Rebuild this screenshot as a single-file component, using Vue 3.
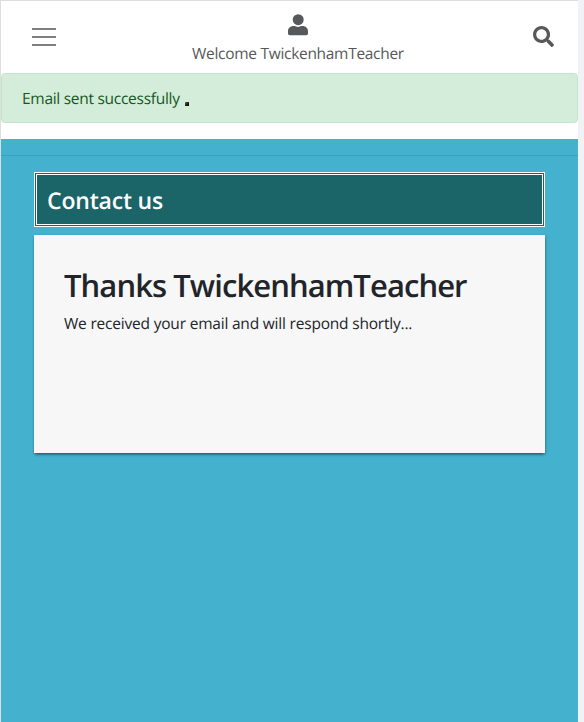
<script setup>
const user = 'TwickenhamTeacher'
</script>

<template>
  <div class="window">
    <div class="page">
      <header class="topbar">
        <button class="menu" aria-label="Menu"><i></i><i></i><i></i></button>
        <div class="account">
          <svg class="user-icon" viewBox="0 0 20 22"><circle cx="10.2" cy="5.7" r="5.500" /><path d="M0 19.300v-1.900c0-3.200 2.300-5.300 5.600-5.300h.8c2.500 1.100 4.700 1.100 7.200 0h.8c3.300 0 5.600 2.100 5.600 5.300v1.900c0 1.200-.7 1.900-1.900 1.900H1.900C.7 21.200 0 20.500 0 19.300z" /></svg>
          <span class="welcome">Welcome {{ user }}</span>
        </div>
        <svg class="search-icon" viewBox="0 0 512 512"><path d="M505 442.700L405.300 343c-4.500-4.500-10.600-7-17-7H372c27.600-35.300 44-79.700 44-128C416 93.100 322.900 0 208 0S0 93.100 0 208s93.100 208 208 208c48.300 0 92.700-16.400 128-44v16.300c0 6.400 2.500 12.500 7 17l99.700 99.700c9.400 9.400 24.600 9.400 33.900 0l28.300-28.300c9.400-9.400 9.400-24.600.1-34zM208 336c-70.700 0-128-57.200-128-128 0-70.700 57.200-128 128-128 70.700 0 128 57.200 128 128 0 70.700-57.200 128-128 128z" /></svg>
      </header>
      <div class="alert"><span class="sent">Email sent successfully</span><button class="dismiss" aria-label="Dismiss"></button></div>
      <main class="content">
        <h2 class="title"><span>Contact us</span></h2>
        <section class="card">
          <h1><span>Thanks {{ user }}</span></h1>
          <p><span>We received your email and will respond shortly...</span></p>
        </section>
      </main>
    </div>
  </div>
</template>

<style>
body { margin: 0; overflow: hidden; }
</style>

<style scoped>
* { box-sizing: border-box; }
button { border: 0; padding: 0; background: none; }
.window {
  width: 584px;
  height: 722px;
  padding-right: 6px;
  background: #f1f2f5;
  font-family: "Open Sans", "Noto Sans", sans-serif;
  font-size: 15.5px;
  letter-spacing: -0.2px;
  line-height: 24px;
  color: #212529;
  white-space: nowrap;
  text-rendering: geometricPrecision;
}
.page {
  height: 100%;
  display: flex;
  flex-direction: column;
  background: #fff;
  border-left: 1px solid #dedede;
  border-top: 1px solid #dedede;
}
.topbar {
  flex: none;
  height: 72px;
  display: flex;
  justify-content: space-between;
  align-items: center;
  padding: 0 24px 0 31px;
  color: #57585a;
}
.menu { width: 24px; height: 18px; display: flex; flex-direction: column; justify-content: space-between; }
.menu i { height: 2px; width: 24px; background: #807e80; }
.account {
  display: flex;
  flex-direction: column;
  align-items: center;
  align-self: flex-start;
  padding: 12px 0 0 7px;
}
.user-icon { width: 20px; height: 22px; margin-top: 1px; fill: #57585a; }
.welcome { margin-top: 5px; letter-spacing: -0.3px; }
.search-icon { width: 21px; height: 21px; margin-top: -2px; fill: #57585a; }
.alert {
  flex: none;
  height: 50px;
  display: flex;
  padding: 12px 20px;
  border: 1px solid #c3e6cb;
  border-radius: 4px;
  background: #d4edda;
  color: #155724;
}
.sent { letter-spacing: -0.28px; }
.dismiss {
  width: 4px;
  height: 4px;
  margin: 16px 0 0 5px;
  background: linear-gradient(135deg, #777, #222 50%, #000);
}
.content {
  flex: 1;
  margin-top: 16px;
  padding: 33px;
  background: linear-gradient(#3b9fbd, #3b9fbd) 0 16px / 100% 1px no-repeat #44b1ce;
}
.title {
  height: 55px;
  margin: 0 0 8px;
  padding: 10px;
  border: 3px double #fff;
  background: #1b6467;
  color: #fff;
  font-size: 23px;
  letter-spacing: -0.2px;
  font-weight: 600;
  line-height: 30px;
}
.card {
  height: 218px;
  padding: 30px;
  background: #f7f7f7;
  box-shadow: 0 2px 3px -1px rgba(0, 0, 0, .55), 1px 1px 3px rgba(0, 0, 0, .15);
}
h1 { margin: 2px 0 6px; font-size: 31px; letter-spacing: -0.93px; line-height: 38px; font-weight: 600; }
p { margin: 0; }
</style>
